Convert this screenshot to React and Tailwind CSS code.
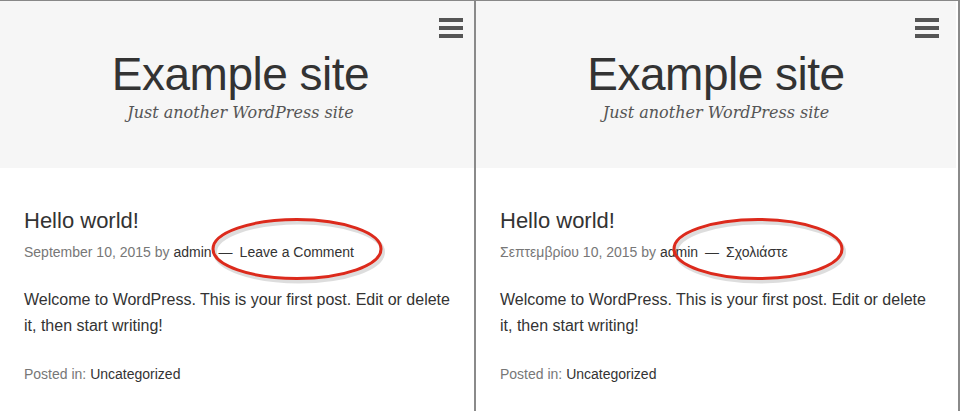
import React from "react";

function Panel({ date, comment, menuRight, headPad }) {
  return (
    <div className="flex flex-col h-full">
      <header className={`relative h-[167px] bg-[#f6f6f6] flex flex-col items-center ${headPad}`}>
        <button className={`absolute top-[17px] ${menuRight} flex flex-col gap-[4px]`}>
          <span className="block w-[24px] h-[4px] bg-[#555]" />
          <span className="block w-[24px] h-[4px] bg-[#555]" />
          <span className="block w-[24px] h-[4px] bg-[#555]" />
        </button>
        <h1 className="mt-[47px] text-[46px] leading-[52px] text-[#333] tracking-[-0.5px]">Example site</h1>
        <p className="mt-[2px] text-[16px] leading-[22px] italic text-[#555] font-['DejaVu_Serif',serif]">
          Just another WordPress site
        </p>
      </header>
      <article className="pl-[24px] pr-[14px] pt-[40px]">
        <h2 className="text-[22px] leading-[26px] text-[#333]">Hello world!</h2>
        <div className="mt-[9px] text-[14px] leading-[18px] text-[#777]">
          {date} by <span className="text-[#333]">admin</span>
          <span className="text-[#333] ml-[7px] mr-[7px]">—</span>
          <span className="text-[#333]">{comment}</span>
        </div>
        <p className="mt-[26px] text-[16px] leading-[26px] text-[#333]">
          Welcome to WordPress. This is your first post. Edit or delete it, then start writing!
        </p>
        <div className="mt-[26px] text-[14px] leading-[18px] text-[#777]">
          Posted in: <span className="text-[#333]">Uncategorized</span>
        </div>
      </article>
    </div>
  );
}

function Ring({ left }) {
  return (
    <svg
      className="absolute top-[214px]"
      style={{ left }}
      width="180"
      height="70"
      viewBox="0 0 180 70"
    >
      <ellipse cx="91" cy="35.5" rx="84" ry="29.5" fill="none" stroke="#00000022" strokeWidth="4" transform="translate(1 1.5)" />
      <ellipse cx="90" cy="34" rx="84" ry="29.5" fill="none" stroke="#dc2a1c" strokeWidth="3" />
    </svg>
  );
}

export default function App() {
  return (
    <div className="relative w-[960px] h-[411px] overflow-hidden bg-white border-t border-[#888] flex font-['Liberation_Sans',Arial,sans-serif]">
      <div className="w-[474px] shrink-0">
        <Panel date="September 10, 2015" comment="Leave a Comment" menuRight="right-[11px]" headPad="pl-[7px]" />
      </div>
      <div className="w-[2px] shrink-0 bg-[#8a8a8a]" />
      <div className="w-[482px] shrink-0 border-r-[2px] border-white">
        <Panel date="Σεπτεμβρίου 10, 2015" comment="Σχολιάστε" menuRight="right-[17px]" headPad="pl-0" />
      </div>
      <div className="w-[2px] shrink-0 bg-[#8a8a8a]" />
      <Ring left="207px" />
      <Ring left="668px" />
    </div>
  );
}
